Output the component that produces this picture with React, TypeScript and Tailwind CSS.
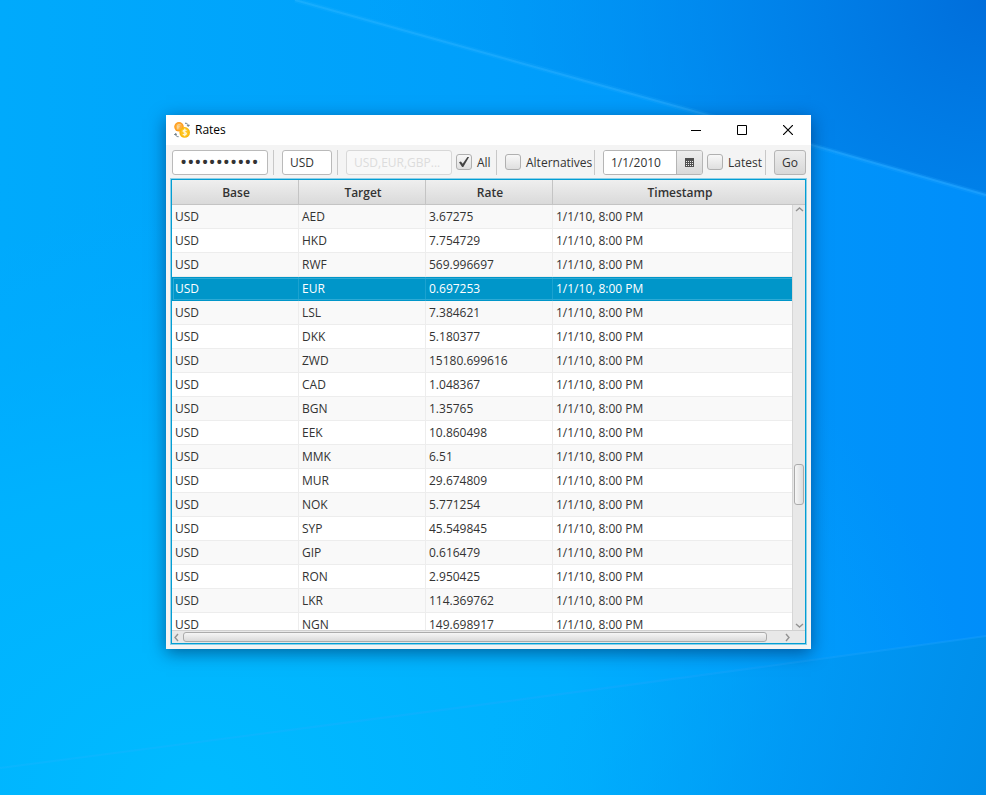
import type { ReactNode } from "react";

const rates: [string, string][] = [
  ["AED", "3.67275"],
  ["HKD", "7.754729"],
  ["RWF", "569.996697"],
  ["EUR", "0.697253"],
  ["LSL", "7.384621"],
  ["DKK", "5.180377"],
  ["ZWD", "15180.699616"],
  ["CAD", "1.048367"],
  ["BGN", "1.35765"],
  ["EEK", "10.860498"],
  ["MMK", "6.51"],
  ["MUR", "29.674809"],
  ["NOK", "5.771254"],
  ["SYP", "45.549845"],
  ["GIP", "0.616479"],
  ["RON", "2.950425"],
  ["LKR", "114.369762"],
  ["NGN", "149.698917"],
];
const selected = "EUR";

function Wallpaper() {
  return (
    <svg
      className="absolute inset-0 -z-10 h-full w-full"
      viewBox="0 0 986 795"
      preserveAspectRatio="none"
      aria-hidden="true"
    >
      <defs>
        <linearGradient id="base" x1="0" y1="0" x2="1" y2="0">
          <stop offset="0" stopColor="#00aafc" />
          <stop offset="0.5" stopColor="#009ffb" />
          <stop offset="1" stopColor="#008efa" />
        </linearGradient>
        <radialGradient id="dark" gradientUnits="userSpaceOnUse" cx="986" cy="0" r="620">
          <stop offset="0" stopColor="#006edb" />
          <stop offset="0.35" stopColor="#0080e8" stopOpacity="0.85" />
          <stop offset="1" stopColor="#0098f4" stopOpacity="0" />
        </radialGradient>
        <radialGradient id="cyan" cx="0.2" cy="1" r="0.8">
          <stop offset="0" stopColor="#00bbff" />
          <stop offset="0.5" stopColor="#00b4ff" stopOpacity="0.8" />
          <stop offset="1" stopColor="#00a8ff" stopOpacity="0" />
        </radialGradient>
        <linearGradient id="low" gradientUnits="userSpaceOnUse" x1="500" y1="640" x2="986" y2="795">
          <stop offset="0" stopColor="#00b2fc" stopOpacity="0" />
          <stop offset="0.6" stopColor="#0098f2" stopOpacity="0.7" />
          <stop offset="1" stopColor="#008de8" />
        </linearGradient>
        <linearGradient id="ray" x1="0" y1="0" x2="1" y2="0">
          <stop offset="0" stopColor="#26b4ff" stopOpacity="0.5" />
          <stop offset="1" stopColor="#1ca0ff" stopOpacity="0.8" />
        </linearGradient>
      </defs>
      <rect width="986" height="795" fill="url(#base)" />
      <rect width="986" height="795" fill="url(#cyan)" />
      <path d="M295 0 H986 V195Z" fill="url(#dark)" />
      <path d="M0 768 L986 636 V795 H0Z" fill="url(#low)" />
      <path d="M295 0 L700 113 L986 195" fill="none" stroke="url(#ray)" strokeWidth="5" opacity="0.35" />
      <path d="M295 0 L700 113 L986 195" fill="none" stroke="url(#ray)" strokeWidth="2" />
      <path d="M0 768 Q600 690 986 636" fill="none" stroke="url(#ray)" strokeWidth="2" opacity="0.5" />
    </svg>
  );
}

function CoinsIcon() {
  return (
    <svg width="16" height="16" viewBox="0 0 16 16" aria-hidden="true">
      <circle cx="5" cy="4.8" r="4.8" fill="#ff9d1e" />
      <circle cx="5" cy="4.8" r="3.5" fill="#ffb03c" />
      <path d="M6.6 2.8H3.8V7.4M2.8 4.3H5.8M2.8 5.8H5.4" fill="none" stroke="#f9dca8" strokeWidth="0.9" />
      <circle cx="10.7" cy="10.4" r="5.3" fill="#fbb90b" />
      <circle cx="10.7" cy="10.4" r="3.9" fill="#ffc420" />
      <path d="M12.6 8.6C11 7.5 8.9 8.1 9.1 9.3S12.4 10.4 12.4 11.6 10.2 13.3 8.8 12.2M10.8 6.6V14.2" fill="none" stroke="#fff6d5" strokeWidth="1.2" />
      <path d="M11 1.2C13 1.1 14.3 2.1 14.4 4M12.8 3.2L14.4 4.4 15.6 2.8M4.6 14.7C2.7 14.8 1.6 13.8 1.5 12M0.3 13L1.5 11.5 3 12.6" fill="none" stroke="#687985" strokeWidth="1" />
    </svg>
  );
}

function Separator() {
  return <div className="h-[25px] w-1.5 shrink-0 pl-px"><div className="h-full w-px bg-[#c8c8c8]" /></div>;
}

function Check({ label, checked = false, width }: { label: string; checked?: boolean; width: string }) {
  return (
    <label className={`${width} flex h-[25px] shrink-0 items-center gap-[5px] whitespace-nowrap`}>
      <span className="relative block h-4 w-4 shrink-0">
        <input
          type="checkbox"
          defaultChecked={checked}
          className="block h-4 w-4 appearance-none rounded-[3px] border border-[#b0b0b0] bg-linear-to-b from-[#f8f8f8] to-[#dfdfdf]"
        />
        {checked && (
          <svg className="pointer-events-none absolute inset-0" width="16" height="16" viewBox="0 0 16 16" aria-hidden="true">
            <path d="M3 8.3 4.9 7.4 6.7 9.8 11.4 3 13.1 3 7.3 13 6.1 13Z" fill="#444" />
          </svg>
        )}
      </span>
      <span className="pt-0.5">{label}</span>
    </label>
  );
}

function Arrow({ d, className, label }: { d: string; className: string; label: string }) {
  return (
    <button aria-label={label} className={`${className} flex shrink-0 items-center justify-center`}>
      <svg width="9" height="9" viewBox="0 0 9 9" fill="none" stroke="#929292" strokeWidth="1.4" aria-hidden="true">
        <path d={d} />
      </svg>
    </button>
  );
}

function Caption({ label, children }: { label: string; children: ReactNode }) {
  return (
    <button aria-label={label} className="flex h-[29px] w-[46px] items-center justify-center">
      <svg width="10" height="10" viewBox="0 0 10 10" fill="none" stroke="#000" strokeWidth="1" aria-hidden="true">
        {children}
      </svg>
    </button>
  );
}

const field = "h-[25px] shrink-0 rounded-[3px] border border-[#bababa] bg-white px-[7px] outline-none";

export default function App() {
  return (
    <main className="relative isolate flex h-screen min-h-[400px] flex-col overflow-hidden pt-[115px] pr-[175px] pb-[146px] pl-[166px] font-['Open_Sans','Noto_Sans',sans-serif] text-[12px] leading-4 text-[#333]">
      <Wallpaper />
      <section className="flex min-h-0 min-w-[645px] flex-1 flex-col bg-[#f4f4f4] shadow-[0_4px_16px_rgba(0,20,60,0.5)]">
        <header className="flex h-[30px] shrink-0 bg-white pl-2 text-black">
          <div className="flex flex-1 items-center gap-[5px]">
            <CoinsIcon />
            <h1>Rates</h1>
          </div>
          <Caption label="Minimize"><path d="M0 5.5H10" /></Caption>
          <Caption label="Maximize"><path d="M0.5 0.5H9.5V9.5H0.5Z" /></Caption>
          <Caption label="Close"><path d="M0 0 10 10M10 0 0 10" strokeWidth="1.2" /></Caption>
        </header>

        <div className="flex h-[34px] shrink-0 items-center gap-1 px-[5px] pl-1.5">
          <input type="password" aria-label="API key" defaultValue="abcdefghijkl" className={`${field} w-24 text-[19px]`} />
          <Separator />
          <input type="text" aria-label="Base currency" defaultValue="USD" className={`${field} w-[50px] pt-px`} />
          <Separator />
          <input
            type="text"
            disabled
            aria-label="Target currencies"
            placeholder="USD,EUR,GBP..."
            className="h-[25px] w-[106px] shrink-0 rounded-[3px] border border-[#d8d8d8] bg-[#f8f8f8] px-[7px] pt-px placeholder:text-[#dcdcdc]"
          />
          <Check label="All" checked width="w-[35px]" />
          <Separator />
          <Check label="Alternatives" width="w-[84px]" />
          <Separator />
          <div className="flex h-[25px] w-[100px] shrink-0 overflow-hidden rounded-[3px] border border-[#b5b5b5]">
            <input type="text" aria-label="Date" defaultValue="1/1/2010" className="min-w-0 flex-1 bg-white px-[7px] pt-0.5 outline-none" />
            <button aria-label="Open calendar" className="flex w-[26px] items-center justify-center border-l border-[#b5b5b5] bg-linear-to-b from-[#eee] to-[#d9d9d9]">
              <svg width="9" height="9" viewBox="0 0 9 9" shapeRendering="crispEdges" aria-hidden="true">
                <rect width="9" height="9" fill="#505050" />
                <path d="M1 3.5H8M1 5.5H8M1 7.5H8" stroke="#eee" strokeDasharray="1 1" />
              </svg>
            </button>
          </div>
          <Check label="Latest" width="w-[53px]" />
          <Separator />
          <button className="h-[25px] w-8 shrink-0 rounded-[3px] border border-[#b5b5b5] bg-linear-to-b from-[#ededed] to-[#d8d8d8] pt-0.5">Go</button>
        </div>

        <div className="mx-[5px] mb-[5px] flex min-h-0 flex-1 flex-col border border-[#039ed3] ring-1 ring-[#8fd0e8]">
          <div className="relative min-h-0 flex-1 overflow-hidden bg-white">
            <table className="w-full table-fixed border-separate border-spacing-0">
              <colgroup>
                <col className="w-[127px]" />
                <col className="w-[127px]" />
                <col className="w-[127px]" />
                <col />
              </colgroup>
              <thead>
                <tr className="bg-linear-to-b from-[#efefef] to-[#d9d9d9]">
                  {["Base", "Target", "Rate", "Timestamp"].map((name) => (
                    <th key={name} className="h-[25px] border-r border-b border-[#c4c4c4] p-0 pt-0.5 pl-0.5 font-semibold last:border-r-0">
                      {name}
                    </th>
                  ))}
                </tr>
              </thead>
              <tbody>
                {rates.map(([target, rate]) => {
                  const active = target === selected;
                  const cell = active
                    ? "h-6 border-r border-[#1ba2d0] p-0 pl-[3px] last:border-r-0"
                    : "h-6 border-r border-b border-[#ededed] p-0 pl-[3px] last:border-r-0";
                  return (
                    <tr
                      key={target}
                      className={
                        active
                          ? "bg-[#0096c9] text-white outline outline-offset-[-2px] outline-[#2eaad5]"
                          : "odd:bg-[#f9f9f9] even:bg-white"
                      }
                    >
                      <td className={cell}>USD</td>
                      <td className={cell}>{target}</td>
                      <td className={cell}>{rate}</td>
                      <td className={cell}>1/1/10, 8:00 PM</td>
                    </tr>
                  );
                })}
              </tbody>
            </table>
            <div className="absolute top-[25px] right-0 bottom-0 flex w-[13px] flex-col border-l border-[#d6d6d6] bg-[#e8e8e8]">
              <Arrow label="Scroll up" className="h-[9px] w-3" d="M1 6 4.5 3 8 6" />
              <div className="flex-[250]" />
              <div className="mx-px h-[41px] rounded-[3px] border border-[#ababab] bg-linear-to-r from-[#f6f6f6] to-[#dcdcdc]" />
              <div className="flex-[116]" />
              <Arrow label="Scroll down" className="h-[9px] w-3" d="M1 3 4.5 6 8 3" />
            </div>
          </div>
          <div className="flex h-[13px] shrink-0 items-center border-t border-[#d0d0d0] bg-[#e8e8e8]">
            <Arrow label="Scroll left" className="h-3 w-[9px]" d="M6 1 3 4.5 6 8" />
            <div className="ml-0.5 h-2.5 flex-1 rounded-[3px] border border-[#ababab] bg-linear-to-b from-[#f6f6f6] to-[#dadada]" />
            <div className="w-4" />
            <Arrow label="Scroll right" className="mr-[13px] h-3 w-[9px]" d="M3 1 6 4.5 3 8" />
          </div>
        </div>
      </section>
    </main>
  );
}
